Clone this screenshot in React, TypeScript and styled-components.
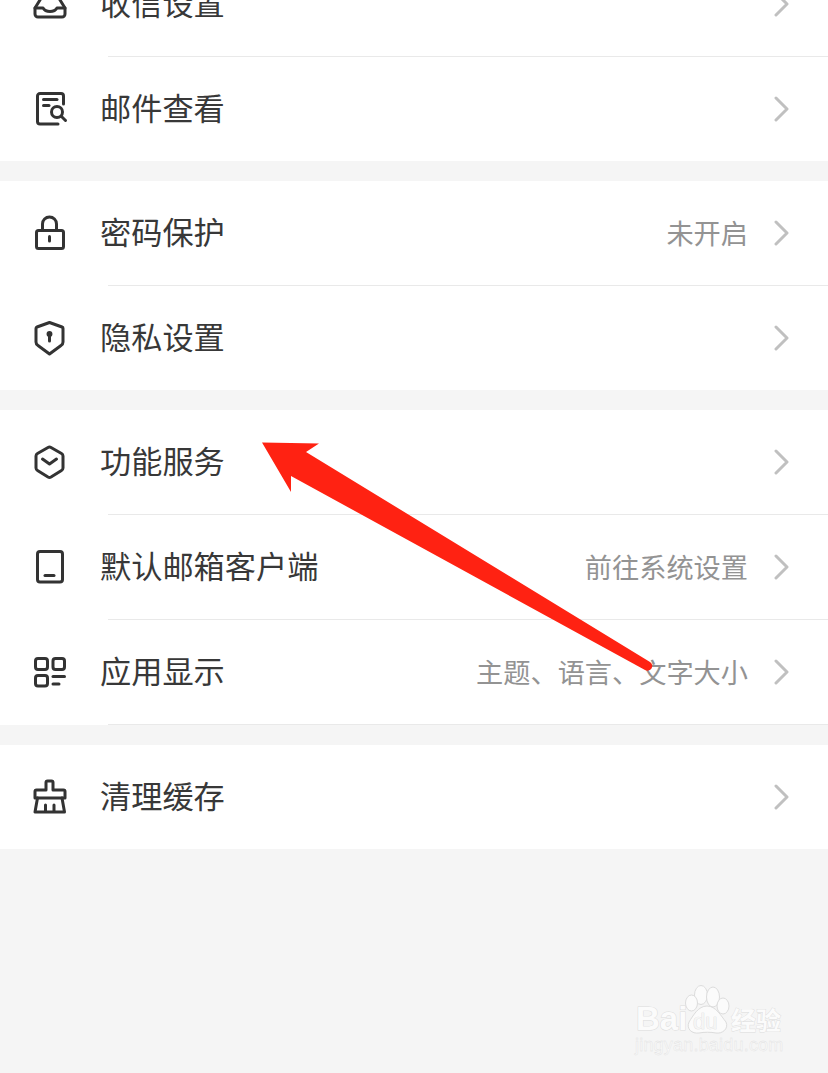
import React from 'react';
import styled, { createGlobalStyle } from 'styled-components';

const GlobalStyle = createGlobalStyle`
    html, body {
        margin: 0;
        padding: 0;
        background: #f5f5f5;
    }
`

const Page = styled.div`
    position: relative;
    width: 828px;
    height: 1073px;
    overflow: hidden;
    background: #f5f5f5;
    font-family: "Noto Sans CJK SC", "Noto Sans", sans-serif;
`

const List = styled.div`
    display: flex;
    flex-direction: column;
    gap: 20px;
    margin-top: -48px;
`

const Section = styled.div`
    background: #fff;
`

const Row = styled.div`
    height: 104px;
    display: flex;
    align-items: center;
    padding: 0 39px 0 32px;
`

const IconBox = styled.svg`
    width: 36px;
    height: 36px;
    flex: none;
    fill: none;
    stroke: #333;
    stroke-width: 3;
    stroke-linecap: round;
    stroke-linejoin: round;
`

const Title = styled.span`
    margin: 0 0 4px 32px;
    flex: 1;
    font-size: 31.2px;
    line-height: 40px;
    color: #383838;
    white-space: nowrap;
`

const Hint = styled.span`
    margin-bottom: 2px;
    font-size: 27.2px;
    line-height: 36px;
    color: #939393;
    white-space: nowrap;
`

const Chevron = styled.svg`
    width: 16px;
    height: 30px;
    margin-left: 25px;
    flex: none;
    fill: none;
    stroke: #c0c0c0;
    stroke-width: 3;
    stroke-linecap: round;
    stroke-linejoin: round;
`

const Divider = styled.div`
    height: 1px;
    margin-left: 108px;
    background: #e9e9e9;
`

const Arrow = styled.svg`
    position: absolute;
    left: 0;
    top: 0;
    width: 828px;
    height: 1073px;
    pointer-events: none;
`

const Watermark = styled.div`
    position: absolute;
    left: 636px;
    top: 985px;
    width: 150px;
    color: #fbfbfb;
    font-family: "Liberation Sans", Arial, sans-serif;
`

const LogoLine = styled.div`
    display: flex;
    align-items: flex-end;
    height: 50px;
`

const LogoBai = styled.span`
    width: 49px;
    flex: none;
    margin-bottom: -2px;
    font-size: 33px;
    line-height: 36px;
    font-weight: 700;
    -webkit-text-stroke: 1px #dcdcdc;
    paint-order: stroke fill;
`

const Paw = styled.div`
    position: relative;
    width: 46px;
    height: 50px;
    flex: none;
`

const PawDrawing = styled.svg`
    position: absolute;
    inset: 0;
    width: 46px;
    height: 50px;
    fill: #fbfbfb;
    stroke: #dcdcdc;
    stroke-width: 1;
`

const LogoDu = styled.span`
    position: absolute;
    left: 8px;
    bottom: 3px;
    font-size: 22px;
    line-height: 20px;
    color: #f5f5f5;
    -webkit-text-stroke: 0.6px #d8d8d8;
    paint-order: stroke fill;
`

const LogoCn = styled.span`
    margin-bottom: 2px;
    font-family: "Noto Sans CJK SC", sans-serif;
    font-size: 25px;
    line-height: 28px;
    font-weight: 700;
    white-space: nowrap;
    -webkit-text-stroke: 0.8px #dcdcdc;
    paint-order: stroke fill;
`

const LogoUrl = styled.div`
    margin-left: -1px;
    font-size: 18px;
    line-height: 20px;
    letter-spacing: 0.2px;
    white-space: nowrap;
    color: #f9f9f9;
    -webkit-text-stroke: 0.35px #e0e0e0;
`

const InboxIcon = () => (
    <IconBox viewBox="0 0 36 36">
        <path d="M3 22 L8 14 L11 3 H25 L28 14 L33 22 V28 a3 3 0 0 1-3 3 H6 a3 3 0 0 1-3-3 Z" />
        <path d="M3 22 H11 Q13 25.5 18 25.5 Q23 25.5 25 22 H33" />
    </IconBox>
)

const MailViewIcon = () => (
    <IconBox viewBox="0 0 36 36">
        <path d="M31.5 13 V5 a2.5 2.5 0 0 0-2.5-2.5 H8 a2.5 2.5 0 0 0-2.5 2.5 V30.5 a2.5 2.5 0 0 0 2.5 2.5 H26" />
        <path d="M11.5 8.5 H25" />
        <path d="M11.5 14.5 H17" />
        <circle cx="25" cy="21" r="5.5" />
        <path d="M29.5 25.5 L33.5 29.5" />
    </IconBox>
)

const LockIcon = () => (
    <IconBox viewBox="0 0 36 36">
        <rect x="4.5" y="15.5" width="27" height="18" rx="2" />
        <path d="M10.5 15 V9 a7 7 0 0 1 14 0 V15" />
        <path d="M17.5 21.5 V26" />
    </IconBox>
)

const ShieldIcon = () => (
    <IconBox viewBox="0 0 36 36">
        <path d="M17.5 2.5 L30 7 a1.5 1.5 0 0 1 1 1.5 V22 a4 4 0 0 1-2 3.5 L17.5 34 L6 25.5 a4 4 0 0 1-2-3.5 V8.5 a1.5 1.5 0 0 1 1-1.5 Z" />
        <circle cx="17.5" cy="14" r="2.2" fill="#333" strokeWidth="1.5" />
        <path d="M17.5 15 V21" />
    </IconBox>
)

const ServiceIcon = () => (
    <IconBox viewBox="0 0 36 36">
        <path d="M16 3.5 a3 3 0 0 1 3 0 L29.5 9.5 a3 3 0 0 1 1.5 2.5 V24 a3 3 0 0 1-1.5 2.5 L19 33 a3 3 0 0 1-3 0 L5.5 26.5 a3 3 0 0 1-1.5-2.5 V12 a3 3 0 0 1 1.5-2.5 Z" />
        <path d="M10.5 15 L17.5 20 L24.5 15" />
    </IconBox>
)

const PhoneIcon = () => (
    <IconBox viewBox="0 0 36 36">
        <rect x="5.5" y="2.5" width="25" height="30.5" rx="2.5" />
        <path d="M13 26.5 H22" />
    </IconBox>
)

const GridIcon = () => (
    <IconBox viewBox="0 0 36 36">
        <rect x="3.5" y="4.5" width="12" height="11" rx="2.5" />
        <rect x="21" y="4.5" width="11.5" height="11" rx="2.5" />
        <rect x="3.5" y="21.5" width="12" height="10.5" rx="2.5" />
        <path d="M21 22.5 H32.5" />
        <path d="M21 30 H27" />
    </IconBox>
)

const BroomIcon = () => (
    <IconBox viewBox="0 0 36 36">
        <path d="M14 11 V3.5 a1.5 1.5 0 0 1 1.5-1.5 H19.5 a1.5 1.5 0 0 1 1.5 1.5 V11 H31.5 a1.5 1.5 0 0 1 1.5 1.5 V19 H3 V12.5 a1.5 1.5 0 0 1 1.5-1.5 Z" />
        <path d="M5.5 19 L3 33 H32.5 L30 19" />
        <path d="M13.5 26 V32" />
        <path d="M22 26 V32" />
    </IconBox>
)

type Item = { icon: React.ReactNode; title: string; hint?: string };

const sections: Item[][] = [
    [
        { icon: <InboxIcon />, title: '收信设置' },
        { icon: <MailViewIcon />, title: '邮件查看' },
    ],
    [
        { icon: <LockIcon />, title: '密码保护', hint: '未开启' },
        { icon: <ShieldIcon />, title: '隐私设置' },
    ],
    [
        { icon: <ServiceIcon />, title: '功能服务' },
        { icon: <PhoneIcon />, title: '默认邮箱客户端', hint: '前往系统设置' },
        { icon: <GridIcon />, title: '应用显示', hint: '主题、语言、文字大小' },
    ],
    [
        { icon: <BroomIcon />, title: '清理缓存' },
    ],
];

const App = () => {

    return (
        <Page>
            <GlobalStyle />
            <List>
                {sections.map((items, s) => (
                    <Section key={s}>
                        {items.map((item, i) => (
                            <React.Fragment key={item.title}>
                                <Row>
                                    {item.icon}
                                    <Title>{item.title}</Title>
                                    {item.hint && <Hint>{item.hint}</Hint>}
                                    <Chevron viewBox="0 0 16 30">
                                        <path d="M3 4 L14 15 L3 26" />
                                    </Chevron>
                                </Row>
                                {(i < items.length - 1 || s === 2) && <Divider />}
                            </React.Fragment>
                        ))}
                    </Section>
                ))}
            </List>

            <Arrow viewBox="0 0 828 1073">
                <path
                    d="M262 442.5 L319 443.5 L306 452 L650 662 a4.5 4.5 0 0 1 -5 8 L291 476 L291 492 Z"
                    fill="#ff2212"
                />
            </Arrow>

            <Watermark>
                <LogoLine>
                    <LogoBai>Bai</LogoBai>
                    <Paw>
                        <PawDrawing viewBox="0 0 46 50">
                            <ellipse cx="16" cy="10" rx="6.5" ry="9.5" />
                            <ellipse cx="28" cy="12" rx="6.5" ry="10" />
                            <ellipse cx="6.5" cy="18" rx="6" ry="8" />
                            <ellipse cx="38" cy="21" rx="6" ry="8" />
                            <path d="M22 21 C31 21 36 31 41 37 C44 44 37 49 31 48 C26 47 19 47 14 48 C7 49 1 44 4 37 C8 31 13 21 22 21 Z" />
                        </PawDrawing>
                        <LogoDu>du</LogoDu>
                    </Paw>
                    <LogoCn>经验</LogoCn>
                </LogoLine>
                <LogoUrl>jingyan.baidu.com</LogoUrl>
            </Watermark>
        </Page>
    );
}

export default App;
